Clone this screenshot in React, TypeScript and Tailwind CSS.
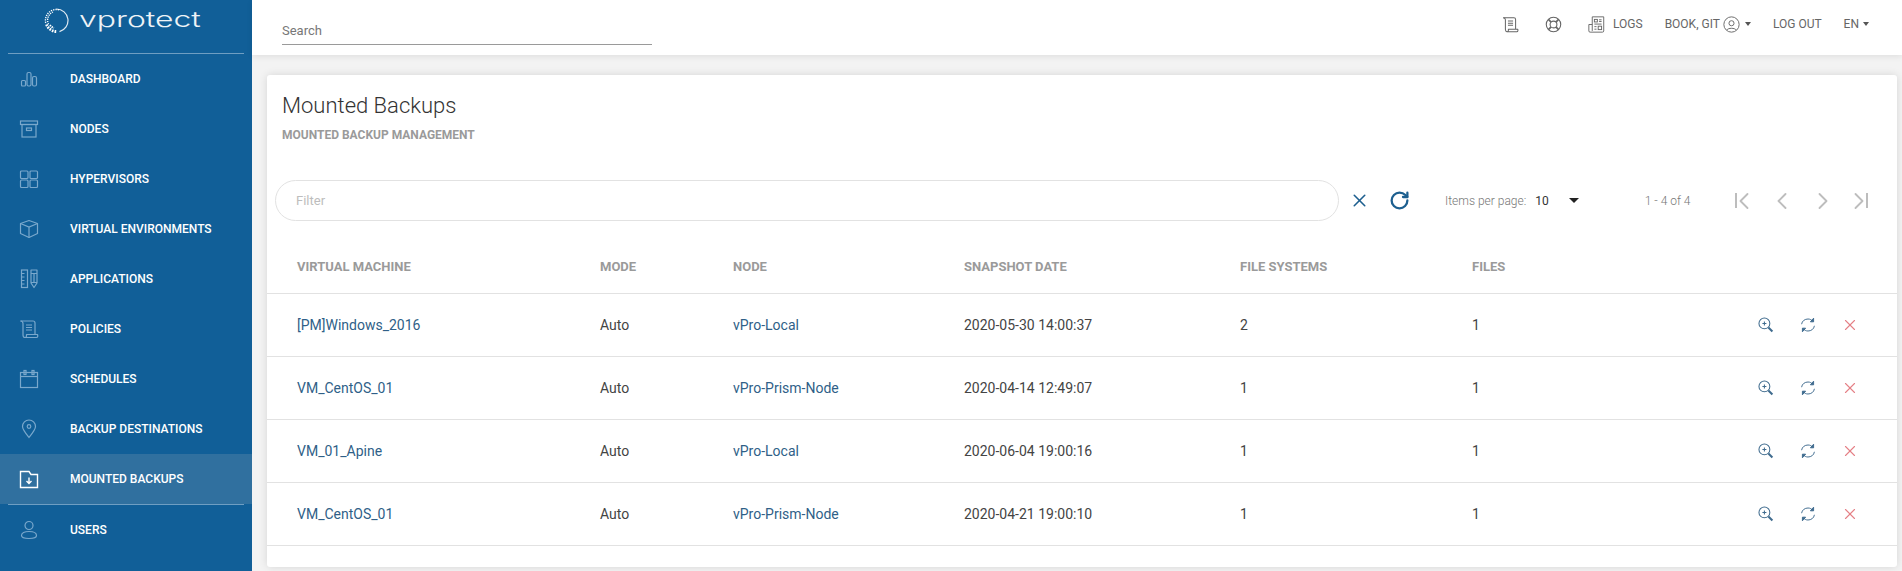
import { ChevronLeft, ChevronRight, RotateCw, X } from "lucide-react";
import type { ReactNode } from "react";

const FONT = "font-['Roboto','Liberation_Sans',sans-serif]";

// ─── ICONS ─────────────────────────────────────────────────────────────────────
function Ico({ children, size = 20, sw = 1.2, className = "" }: { children: ReactNode; size?: number; sw?: number; className?: string }) {
  return (
    <svg width={size} height={size} viewBox="0 0 20 20" fill="none" stroke="currentColor" strokeWidth={sw} className={className}>
      {children}
    </svg>
  );
}

const DashIcon = () => (
  <Ico>
    <rect x="2.5" y="11.5" width="4" height="5.5" rx="1" />
    <rect x="8" y="3.5" width="4" height="13.5" rx="1.5" />
    <rect x="13.5" y="7.5" width="4" height="9.5" rx="1.5" />
  </Ico>
);
const NodesIcon = () => (
  <Ico>
    <rect x="1.5" y="2" width="17" height="3.5" />
    <rect x="3" y="5.5" width="14" height="12.5" />
    <rect x="7.5" y="9" width="5" height="2.5" />
  </Ico>
);
const GridIcon = () => (
  <Ico>
    <rect x="1.5" y="2" width="7.5" height="7.5" rx="1" />
    <rect x="11" y="2" width="7.5" height="7.5" rx="1" />
    <rect x="1.5" y="11" width="7.5" height="7.5" rx="1" />
    <rect x="11" y="11" width="7.5" height="7.5" rx="1" />
  </Ico>
);
const CubeIcon = () => (
  <Ico>
    <path d="M10 1.5 18.5 4.5V14.5L10 18.5 1.5 14.5V4.5Z" strokeLinejoin="round" />
    <path d="M1.5 4.5 10 8 18.5 4.5M10 8V18.5" />
  </Ico>
);
const AppsIcon = () => (
  <Ico>
    <rect x="2.5" y="1" width="6" height="17.5" />
    <path d="M2.5 4.5H5.5M2.5 8H5.5M2.5 11.5H5.5M2.5 15H5.5" />
    <path d="M12 1H18V14L15 18.5 12 14Z" strokeLinejoin="round" />
    <path d="M12 4.5H18M15 4.5V13M12 13.5H18" />
  </Ico>
);
const ScrollIcon = ({ size = 20 }: { size?: number }) => (
  <Ico size={size}>
    <path d="M1.5 2H14C15.5 2 16 2.8 16 4V15.5H7.5V17C7.5 18.5 6.5 18.5 6 18.5H17.5C18.8 18.5 19 17 18.5 15.5H16" strokeLinejoin="round" />
    <path d="M1.5 2C3 2.2 4 3 4 4.5V16C4 17.8 5 18.5 6 18.5" />
    <path d="M7 6H13M7 8.5H13M7 11H13" />
  </Ico>
);
const CalendarIcon = () => (
  <Ico>
    <rect x="1.5" y="3.5" width="17" height="15" />
    <path d="M1.5 7.5H18.5" />
    <rect x="5" y="1.5" width="2" height="4" />
    <rect x="13" y="1.5" width="2" height="4" />
  </Ico>
);
const PinIcon = () => (
  <Ico>
    <path d="M10 18.5C6 13.5 3.5 10.5 3.5 7.5A6.5 6.5 0 0 1 16.5 7.5C16.5 10.5 14 13.5 10 18.5Z" />
    <circle cx="10" cy="7.5" r="1.8" />
  </Ico>
);
const FolderDownIcon = () => (
  <Ico sw={1.4} className="text-white">
    <path d="M1.5 2.5H10L12 5.5H18.5V18.5H1.5Z" />
    <path d="M10 8.5V14.5M7.5 12 10 14.5 12.5 12" />
  </Ico>
);
const UserIcon = () => (
  <Ico>
    <circle cx="10" cy="5.5" r="4" />
    <path d="M10 11.5C5.5 11.5 2.5 13 2.5 15.5 2.5 17.5 4.5 18.5 10 18.5 15.5 18.5 17.5 17.5 17.5 15.5 17.5 13 14.5 11.5 10 11.5Z" />
  </Ico>
);
const BuoyIcon = () => (
  <Ico size={17} sw={1.3}>
    <circle cx="10" cy="10" r="8.5" />
    <circle cx="10" cy="10" r="4" />
    <path d="M4 4 7.2 7.2M16 4 12.8 7.2M4 16 7.2 12.8M16 16 12.8 12.8" strokeWidth="2" />
  </Ico>
);
const LogsIcon = () => (
  <Ico size={17} sw={1.1}>
    <path d="M5 17.5V1H18.5V17.5C18.5 18.5 18 19 17 19H2.5C1.5 19 1 18.5 1 17.5V10H5" />
    <rect x="7.5" y="4" width="3.5" height="3" />
    <path d="M13 4.5H16M13 6.5H16M7.5 9.5H16" />
    <rect x="12" y="12" width="4" height="4" />
    <path d="M7.5 12.5H10M7.5 15.5H10" />
  </Ico>
);
const AvatarIcon = () => (
  <Ico size={17} sw={1.1}>
    <circle cx="10" cy="10" r="9" />
    <circle cx="10" cy="8.5" r="3" />
    <path d="M4.5 16.5C6 13.8 14 13.8 15.5 16.5" />
  </Ico>
);
const ZoomIcon = () => (
  <Ico size={16} sw={1.3}>
    <circle cx="8" cy="8" r="6.8" />
    <path d="M8 5.5V10.5M5.5 8H10.5" />
    <path d="M13 13 18 18" strokeWidth="2.6" />
  </Ico>
);
const SyncIcon = () => (
  <Ico size={16} sw={1.2}>
    <path d="M2 9C2.5 5 6 2.5 10 2.5 12.5 2.5 14.5 3.5 16 5.5" />
    <path d="M18 11C17.5 15 14 17.5 10 17.5 7.5 17.5 5.5 16.5 4 14.5" />
    <path d="M17 1.5V6H13Z" fill="currentColor" />
    <path d="M3 18.5V14H7Z" fill="currentColor" />
  </Ico>
);

function Logo() {
  return (
    <div className="flex h-[53px] items-start pl-[44px] pt-[5px]">
      <svg width="25" height="25" viewBox="0 0 25 25" fill="none" className="mt-[3px] shrink-0">
        <path d="M12.5 1A11.5 11.5 0 0 1 15.5 23.6" stroke="#dfe9f1" strokeWidth="1.2" />
        <path d="M15 1.8A11 11 0 0 0 2 16" stroke="#ffffff" strokeWidth="1.4" strokeDasharray="1.3 1" />
        <path d="M9 4A9 9 0 0 0 5 17" stroke="#ffffff" strokeWidth="1.3" strokeDasharray="1.2 1" />
        <path d="M2.5 16.5A11 11 0 0 0 13 23.5" stroke="#ffffff" strokeWidth="2.8" strokeDasharray="1.7 1" />
        <path d="M6 17A8 8 0 0 0 10 20" stroke="#ffffff" strokeWidth="1.8" strokeDasharray="1.4 0.9" />
      </svg>
      <span className="ml-[10px] origin-left scale-x-[1.45] font-['Inter',sans-serif] text-[22px] leading-[28px] font-light text-[#eef3f7]">vprotect</span>
    </div>
  );
}

// ─── DATA ──────────────────────────────────────────────────────────────────────
const navItems: { label: string; icon: ReactNode; active?: boolean }[] = [
  { label: "DASHBOARD", icon: <DashIcon /> },
  { label: "NODES", icon: <NodesIcon /> },
  { label: "HYPERVISORS", icon: <GridIcon /> },
  { label: "VIRTUAL ENVIRONMENTS", icon: <CubeIcon /> },
  { label: "APPLICATIONS", icon: <AppsIcon /> },
  { label: "POLICIES", icon: <ScrollIcon /> },
  { label: "SCHEDULES", icon: <CalendarIcon /> },
  { label: "BACKUP DESTINATIONS", icon: <PinIcon /> },
  { label: "MOUNTED BACKUPS", icon: <FolderDownIcon />, active: true },
];

const rows = [
  { vm: "[PM]Windows_2016", node: "vPro-Local", date: "2020-05-30 14:00:37", fs: 2 },
  { vm: "VM_CentOS_01", node: "vPro-Prism-Node", date: "2020-04-14 12:49:07", fs: 1 },
  { vm: "VM_01_Apine", node: "vPro-Local", date: "2020-06-04 19:00:16", fs: 1 },
  { vm: "VM_CentOS_01", node: "vPro-Prism-Node", date: "2020-04-21 19:00:10", fs: 1 },
];

const COLS = "grid grid-cols-[303px_133px_231px_276px_232px_1fr] items-center pl-[30px]";

function NavRow({ label, icon, active }: { label: string; icon: ReactNode; active?: boolean }) {
  return (
    <div className={`flex h-[50px] items-center pl-[19px] ${active ? "bg-[#30709f]" : ""}`}>
      <span className={`flex w-[51px] shrink-0 ${active ? "" : "text-[#7aa8cc]"}`}>{icon}</span>
      <span className="text-[12px] font-medium text-white">{label}</span>
    </div>
  );
}

export default function App() {
  return (
    <div className={`flex h-[571px] w-[1902px] overflow-hidden bg-[#f3f3f3] ${FONT}`}>
      {/* Sidebar */}
      <aside className="w-[252px] shrink-0 bg-[#115f98]">
        <Logo />
        <div className="mx-2 h-px bg-[#6f9ec2]" />
        <nav>
          {navItems.map(item => (
            <NavRow key={item.label} {...item} />
          ))}
          <div className="mx-2 h-px bg-[#6f9ec2]" />
          <NavRow label="USERS" icon={<UserIcon />} />
        </nav>
      </aside>

      <div className="flex min-w-0 flex-1 flex-col">
        {/* Top bar */}
        <header className="flex h-[55px] shrink-0 items-center justify-between bg-white pl-[30px] pr-[33px] shadow-[0_2px_6px_rgba(0,0,0,0.08)]">
          <div className="mt-[5px] flex h-[30px] w-[370px] items-center border-b border-[#9a9a9a] pt-[2px] text-[13px] text-[#777]">Search</div>
          <div className="flex items-center pb-[7px] text-[12px] text-[#666]">
            <span className="mr-[26px] flex"><ScrollIcon size={17} /></span>
            <span className="mr-[26px] flex"><BuoyIcon /></span>
            <span className="mr-[8px] flex"><LogsIcon /></span>
            <span className="mr-[22px]">LOGS</span>
            <span>BOOK, GIT</span>
            <span className="mr-[5px] ml-[3px] flex"><AvatarIcon /></span>
            <span className="mr-[22px] h-0 w-0 border-x-[3px] border-t-[4px] border-x-transparent border-t-[#555]" />
            <span className="mr-[22px]">LOG OUT</span>
            <span>EN</span>
            <span className="ml-[4px] h-0 w-0 border-x-[3px] border-t-[4px] border-x-transparent border-t-[#555]" />
          </div>
        </header>

        {/* Card */}
        <main className="mt-[20px] mr-[5px] ml-[15px] h-[492px] rounded-[3px] bg-white shadow-[0_0_8px_rgba(0,0,0,0.12)]">
          <div className="pt-[17px] pl-[15px]">
            <h1 className="text-[22px] leading-[28px] font-light text-[#333]">Mounted Backups</h1>
            <p className="mt-[8px] text-[12px] leading-[14px] font-bold text-[#9a9a9a]">MOUNTED BACKUP MANAGEMENT</p>
          </div>

          {/* Filter + pagination */}
          <div className="mt-[38px] flex h-[41px] items-center pl-[8px]">
            <div className="flex h-[41px] w-[1064px] shrink-0 items-center rounded-full border border-[#e2e2e2] pl-[20px] text-[13px] text-[#bdbdbd]">Filter</div>
            <X size={21} strokeWidth={1.8} className="ml-[10px] text-[#1d5f8f]" />
            <RotateCw size={21} strokeWidth={2.6} className="ml-[19px] text-[#1d5f8f]" />
            <span className="ml-[35px] text-[12px] font-light text-[#777]">Items per page:</span>
            <span className="ml-[9px] text-[12px] text-[#333]">10</span>
            <span className="ml-[20px] h-0 w-0 border-x-[5px] border-t-[5px] border-x-transparent border-t-[#222]" />
            <span className="ml-[66px] text-[12px] font-light text-[#777]">1 - 4 of 4</span>
            <span className="ml-[32px] flex w-[40px] items-center justify-center pl-[2px] text-[#bdbdbd]">
              <span className="h-[15px] w-[2px] bg-[#bdbdbd]" />
              <ChevronLeft size={28} strokeWidth={1.6} className="-ml-[7px] -mr-[5px]" />
            </span>
            <span className="flex w-[40px] justify-center pr-[2px] text-[#bdbdbd]"><ChevronLeft size={28} strokeWidth={1.6} /></span>
            <span className="flex w-[40px] justify-center text-[#bdbdbd]"><ChevronRight size={28} strokeWidth={1.6} /></span>
            <span className="flex w-[40px] items-center justify-center pr-[8px] text-[#bdbdbd]">
              <ChevronRight size={28} strokeWidth={1.6} className="-mr-[7px] -ml-[5px]" />
              <span className="h-[15px] w-[2px] bg-[#bdbdbd]" />
            </span>
          </div>

          {/* Table */}
          <div className={`${COLS} mt-[14px] h-[59px] border-b border-[#e2e2e2] pt-[6px] text-[13px] font-bold text-[#9a9a9a]`}>
            <span>VIRTUAL MACHINE</span>
            <span>MODE</span>
            <span>NODE</span>
            <span>SNAPSHOT DATE</span>
            <span>FILE SYSTEMS</span>
            <span>FILES</span>
          </div>
          {rows.map(r => (
            <div key={r.date} className={`${COLS} h-[63px] border-b border-[#e2e2e2] text-[14px] text-[#444]`}>
              <span className="text-[#2f5f88]">{r.vm}</span>
              <span>Auto</span>
              <span className="text-[#2f5f88]">{r.node}</span>
              <span>{r.date}</span>
              <span>{r.fs}</span>
              <div className="flex items-center justify-between pr-[26px]">
                <span>1</span>
                <div className="flex items-center">
                  <span className="flex w-[42px] justify-center text-[#3f6b8e]"><ZoomIcon /></span>
                  <span className="flex w-[42px] justify-center text-[#3f6b8e]"><SyncIcon /></span>
                  <span className="flex w-[42px] justify-center text-[#e57f86]"><X size={18} strokeWidth={1.5} /></span>
                </div>
              </div>
            </div>
          ))}
        </main>
      </div>
    </div>
  );
}
